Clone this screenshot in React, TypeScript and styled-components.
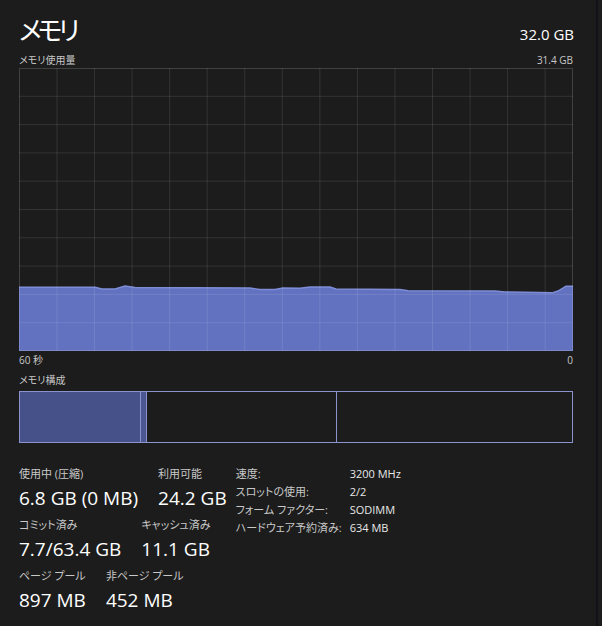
import styled, { createGlobalStyle } from 'styled-components';

const GlobalStyle = createGlobalStyle`
  html, body {
    margin: 0;
    padding: 0;
    background: #1c1c1c;
  }
  body {
    font-family: "Open Sans", "Noto Sans CJK JP", sans-serif;
    font-feature-settings: "palt";
    color: #ffffff;
  }
`;

const Page = styled.div`
  width: 598px;
  height: 626px;
  box-sizing: border-box;
  padding: 12px 0 0 19px;
  border-right: 2px solid #121219;
  overflow: hidden;
`;

const Content = styled.div`
  width: 554px;
  display: flex;
  flex-direction: column;
`;

const Header = styled.div`
  display: flex;
  justify-content: space-between;
  align-items: baseline;
`;

const Title = styled.h1`
  margin: 0;
  font-size: 26px;
  font-weight: 400;
  line-height: 36px;
  letter-spacing: -4px;
`;

const Total = styled.div`
  font-size: 15px;
  line-height: 20px;
  margin-right: -1px;
`;

const Caption = styled.div<{ $mt?: number }>`
  display: flex;
  justify-content: space-between;
  margin-top: ${(p) => p.$mt ?? 0}px;
  font-size: 10px;
  line-height: 12px;
  color: #c8c8c8;
`;

const Graph = styled.svg`
  display: block;
  margin-top: 2px;
`;

const Composition = styled.div`
  display: flex;
  margin-top: 5px;
  height: 52px;
  box-sizing: border-box;
  border: 1px solid #8b93cf;
`;

const Segment = styled.div<{ $w?: number; $fill?: string; $last?: boolean }>`
  ${(p) => (p.$w ? `width: ${p.$w}px;` : 'flex: 1;')}
  box-sizing: border-box;
  background: ${(p) => p.$fill ?? 'transparent'};
  border-right: ${(p) => (p.$last ? 'none' : '1px solid #8b93cf')};
`;

const Stats = styled.div`
  display: flex;
  gap: 9px;
  margin-top: 24px;
`;

const StatGroup = styled.div`
  display: flex;
  flex-direction: column;
  gap: 8px;
`;

const StatRow = styled.div`
  display: flex;
  gap: 20px;
`;

const Stat = styled.div`
  display: flex;
  flex-direction: column;
  gap: 5px;
`;

const Label = styled.div`
  font-size: 11px;
  line-height: 14px;
  color: #c8c8c8;
  white-space: nowrap;
`;

const Value = styled.div`
  font-size: 19px;
  line-height: 24px;
  color: #ffffff;
  white-space: nowrap;
`;

const Details = styled.div`
  display: grid;
  grid-template-columns: 114px auto;
  row-gap: 4px;
  font-size: 11px;
  line-height: 14px;
  align-content: start;
`;

const DetailKey = styled.div`
  color: #c8c8c8;
  white-space: nowrap;
`;

const DetailValue = styled.div`
  color: #e8e8e8;
  white-space: nowrap;
`;

const W = 554;
const H = 283;

// sampled usage curve (x, y) in graph coordinates
const usage: [number, number][] = [
  [0, 219.3], [76, 219.3], [83, 221], [96, 221], [106, 218], [116, 219.5],
  [231, 220], [241, 221.5], [256, 221.5], [264, 220], [281, 220.3], [291, 219],
  [311, 219], [317, 221], [381, 221.5], [389, 222.8], [476, 223], [486, 224],
  [521, 224.5], [533, 224.8], [539, 223], [547, 218.3], [554, 218.3],
];

function MemoryGraph() {
  const verticals = Array.from({ length: 14 }, (_, k) => 38 + k * 37.55);
  const horizontals = Array.from({ length: 9 }, (_, k) => 28.3 * (k + 1));
  const line = usage.map(([x, y]) => `${x},${y}`).join(' ');
  const area = `0,${H} ${line} ${W},${H}`;
  return (
    <Graph width={W} height={H} viewBox={`0 0 ${W} ${H}`}>
      <polygon points={area} fill="#6272c0" />
      <polyline points={line} fill="none" stroke="#7f8dd6" strokeWidth={1.4} />
      {verticals.map((x) => (
        <line key={`v${x}`} x1={x} y1={0} x2={x} y2={H} stroke="rgba(255,255,255,0.1)" />
      ))}
      {horizontals.map((y) => (
        <line key={`h${y}`} x1={0} y1={y} x2={W} y2={y} stroke="rgba(255,255,255,0.1)" />
      ))}
      <rect x={0.5} y={0.5} width={W - 1} height={H - 1} fill="none" stroke="rgba(255,255,255,0.16)" />
    </Graph>
  );
}

export default function App() {
  return (
    <>
      <GlobalStyle />
      <Page>
        <Content>
          <Header>
            <Title>メモリ</Title>
            <Total>32.0 GB</Total>
          </Header>
          <Caption $mt={6}>
            <span>メモリ使用量</span>
            <span>31.4 GB</span>
          </Caption>
          <MemoryGraph />
          <Caption $mt={3}>
            <span>60 秒</span>
            <span>0</span>
          </Caption>
          <Caption $mt={8}>
            <span>メモリ構成</span>
          </Caption>
          <Composition>
            <Segment $w={121} $fill="#465089" />
            <Segment $w={6} $fill="#4c5690" />
            <Segment $w={190} />
            <Segment $last />
          </Composition>
          <Stats>
            <StatGroup>
              <StatRow>
                <Stat>
                  <Label>使用中 (圧縮)</Label>
                  <Value>6.8 GB (0 MB)</Value>
                </Stat>
                <Stat>
                  <Label>利用可能</Label>
                  <Value>24.2 GB</Value>
                </Stat>
              </StatRow>
              <StatRow>
                <Stat>
                  <Label>コミット済み</Label>
                  <Value>7.7/63.4 GB</Value>
                </Stat>
                <Stat>
                  <Label>キャッシュ済み</Label>
                  <Value>11.1 GB</Value>
                </Stat>
              </StatRow>
              <StatRow>
                <Stat>
                  <Label>ページ プール</Label>
                  <Value>897 MB</Value>
                </Stat>
                <Stat>
                  <Label>非ページ プール</Label>
                  <Value>452 MB</Value>
                </Stat>
              </StatRow>
            </StatGroup>
            <Details>
              <DetailKey>速度:</DetailKey>
              <DetailValue>3200 MHz</DetailValue>
              <DetailKey>スロットの使用:</DetailKey>
              <DetailValue>2/2</DetailValue>
              <DetailKey>フォーム ファクター:</DetailKey>
              <DetailValue>SODIMM</DetailValue>
              <DetailKey>ハードウェア予約済み:</DetailKey>
              <DetailValue>634 MB</DetailValue>
            </Details>
          </Stats>
        </Content>
      </Page>
    </>
  );
}
